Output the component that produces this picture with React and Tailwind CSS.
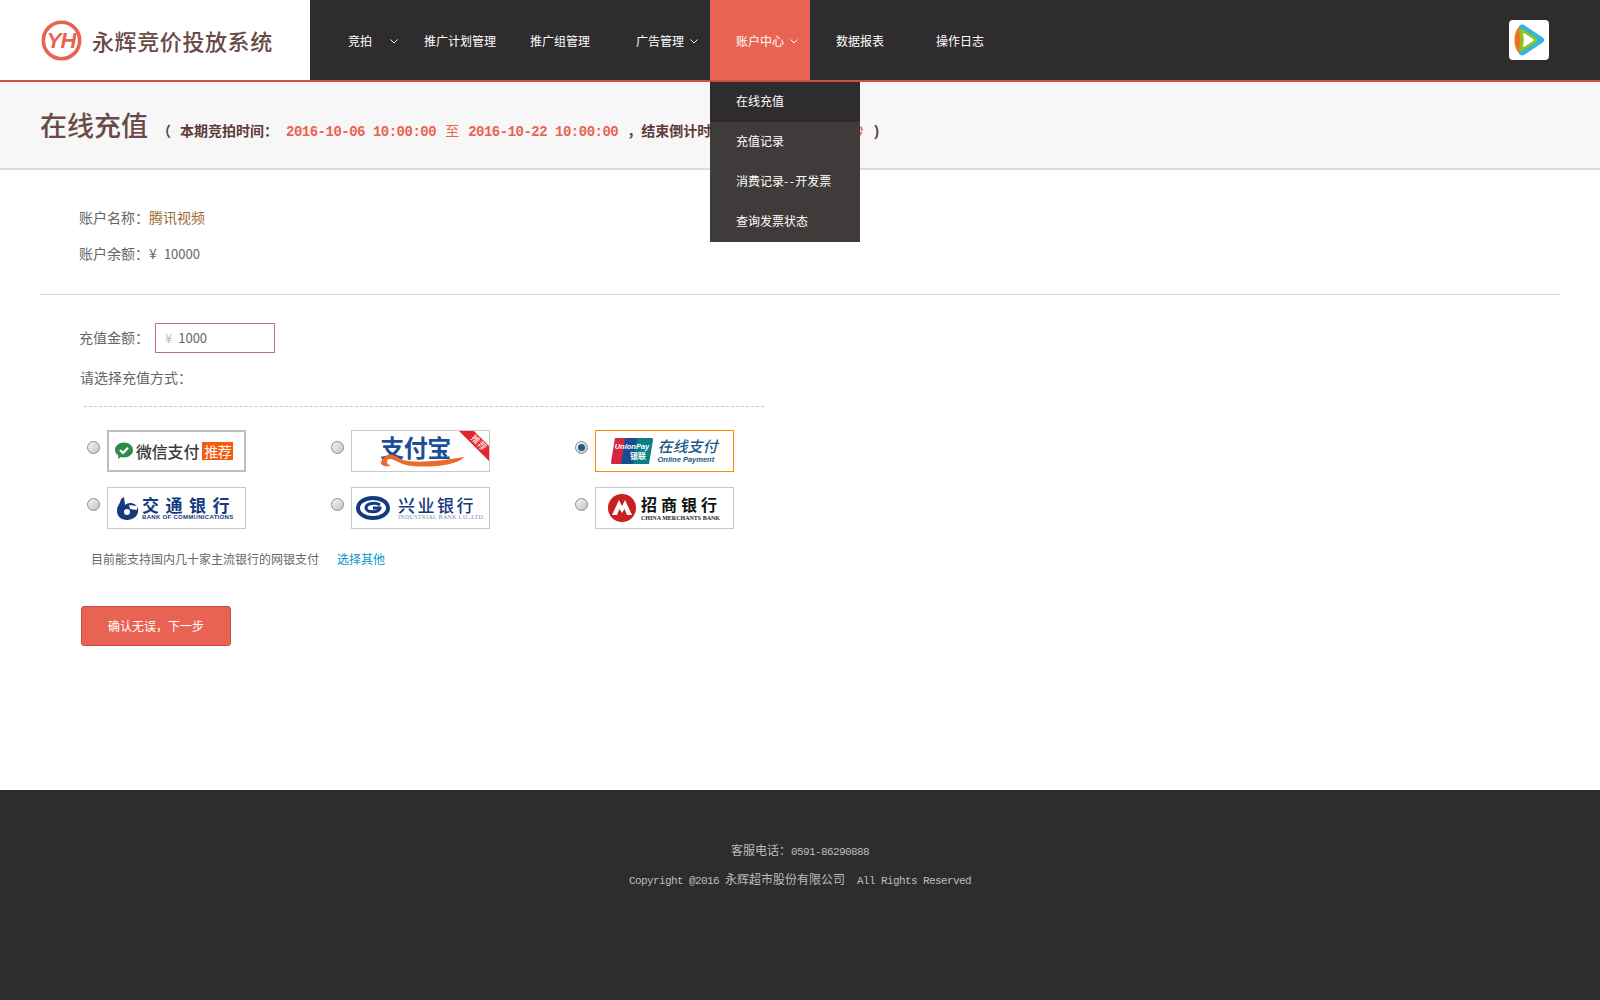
import React from 'react';

const sans = 'font-["Noto_Sans_CJK_SC","Liberation_Sans",sans-serif]';

const navItems = [
  { label: '竞拍', arrow: true },
  { label: '推广计划管理' },
  { label: '推广组管理' },
  { label: '广告管理', arrow: true },
  { label: '账户中心', arrow: true, active: true },
  { label: '数据报表' },
  { label: '操作日志' },
];

const subMenu = [
  '在线充值',
  '充值记录',
  <>消费记录<span className="tracking-[1.5px]">--</span>开发票</>,
  '查询发票状态',
];

const Chevron = () => (
  <svg width="8" height="5" viewBox="0 0 8 5" className="absolute right-[12px] top-[39px]" fill="none" stroke="#fff" strokeWidth="1">
    <path d="M0.5 0.5 L4 4 L7.5 0.5" />
  </svg>
);

const Logo = () => (
  <div className="flex items-center">
    <svg width="41" height="41" viewBox="0 0 41 41">
      <circle cx="20.5" cy="20.5" r="18.2" fill="#fff" stroke="#e96352" strokeWidth="3.6" />
      <text x="20" y="28" textAnchor="middle" fontFamily="Liberation Sans" fontWeight="700" fontStyle="italic" fontSize="22" letterSpacing="-1" fill="#e96352">YH</text>
    </svg>
    <span className="ml-[10px] text-[22px] leading-none font-medium tracking-[0.6px] text-[#6a4a48]">永辉竞价投放系统</span>
  </div>
);

const VideoIcon = () => (
  <div className="flex h-10 w-10 items-center justify-center rounded-[4px] bg-white">
    <svg width="32" height="32" viewBox="0 0 32 32">
      <path d="M6 3 C0 8 0 24 6 29 L13 29 L13 3 Z" fill="#e8761c" />
      <path d="M6 3 C6 1 9 0 11 1 L29 13 C32 15 32 17 29 19 L11 31 C9 32 6 31 6 29 C9 21 9 11 6 3 Z" fill="#2eb4e6" />
      <path d="M6 7 C6 5 8 4 10 5 L23 13.5 C25 15 25 17 23 18.5 L10 27 C8 28 6 27 6 25 C8 19 8 13 6 7 Z" fill="#8dc21f" />
      <path d="M10 10 C10 9 11 9 12 9.5 L20 15 C21 15.6 21 16.4 20 17 L12 22.5 C11 23 10 23 10 22 C11 18 11 14 10 10 Z" fill="#fff" />
    </svg>
  </div>
);

const Radio = ({ checked }) => (
  <span className="mt-[11px] flex h-[13px] w-[13px] shrink-0 items-center justify-center rounded-full border border-[#8a8a8a] bg-linear-to-br from-[#f6f6f6] to-[#c4c4c4]">
    {checked && <span className="h-[7px] w-[7px] rounded-full bg-[#1f5f8f]" />}
  </span>
);

const WechatLogo = () => (
  <div className="flex w-full items-center pl-[5px]">
    <svg width="20" height="20" viewBox="0 0 20 20" className="shrink-0">
      <path d="M10 1.5 C15 1.5 19 4.8 19 9 C19 13.2 15 16.5 10 16.5 C9 16.5 8 16.4 7 16.1 L4 18 L4.4 14.6 C2.3 13.2 1 11.2 1 9 C1 4.8 5 1.5 10 1.5 Z" fill="#2e8b48" />
      <path d="M6 9 L9 12 L14 6.8" fill="none" stroke="#fff" strokeWidth="2.2" />
    </svg>
    <span className="ml-[2px] text-[16px] leading-none font-medium tracking-[-0.2px] text-[#3a3a3a]">微信支付</span>
    <span className="ml-[3px] flex h-[18px] w-[31px] items-center justify-center bg-[#f9580d] text-[14px] leading-none tracking-[-0.5px] text-white">推荐</span>
  </div>
);

const AlipayLogo = () => (
  <div className="relative flex h-full w-full justify-center">
    <span className="mt-[2px] -ml-[10px] text-[24px] leading-[28px] font-bold tracking-[-0.5px] text-[#1b4f9c]">支付宝</span>
    <svg width="86" height="18" viewBox="0 0 86 18" className="absolute left-[28px] top-[20px]">
      <path d="M1 11 C5 2 13 2 19 7 C25 12 50 12 84 6 C78 14 52 17 32 15 C20 14 14 7 9 8 C6 9 6 13 11 15 C4 16 0 14 1 11 Z" fill="#ef6a28" />
    </svg>
    <svg width="30" height="30" viewBox="0 0 30 30" className="absolute right-0 top-0">
      <path d="M0 0 L15 0 L30 15 L30 30 Z" fill="#e2262a" />
    </svg>
    <span className="absolute right-[1px] top-[7px] rotate-45 text-[9px] leading-none text-white">推荐</span>
  </div>
);

const UnionPayLogo = () => (
  <div className="flex w-full items-center justify-center">
    <svg width="42" height="26" viewBox="0 0 42 26" className="shrink-0">
      <path d="M4 0 L18 0 L14 26 L1 26 C0 26 0 25 0 24 Z" fill="#d9263f" />
      <path d="M14 0 L30 0 L26 26 L10 26 Z" fill="#1a4c8f" />
      <path d="M26 0 L41 0 C42 0 42 1 42 2 L38 26 L22 26 Z" fill="#0b7f85" />
      <text x="21" y="11" textAnchor="middle" fontFamily="Liberation Sans" fontWeight="700" fontStyle="italic" fontSize="7.5" fill="#fff">UnionPay</text>
      <text x="27" y="21" textAnchor="middle" fontFamily="Noto Sans CJK SC" fontWeight="700" fontSize="8" fill="#fff">银联</text>
    </svg>
    <div className="ml-[4px] flex flex-col">
      <span className="text-[15px] leading-[18px] font-medium text-[#1d5a8a] italic">在线支付</span>
      <span className="font-['Liberation_Sans'] text-[7.5px] leading-[10px] font-bold text-[#1d5a8a] italic">Online Payment</span>
    </div>
  </div>
);

const BocomLogo = () => (
  <div className="flex w-full items-center justify-center">
    <svg width="22" height="24" viewBox="0 0 22 24" className="mt-[2px] shrink-0">
      <path d="M4 2 L7 0 L8 8 C12 4 20 6 21 12 C22 19 16 23 10 23 C4 23 0 19 0 14 C0 9 3 7 4 2 Z" fill="#15397f" />
      <circle cx="10" cy="15" r="3" fill="#fff" />
      <path d="M12 8 L20 9 L20 13 L13 12 Z" fill="#fff" />
    </svg>
    <div className="ml-[3px] flex flex-col items-start">
      <span className="text-[17px] leading-[19px] font-bold tracking-[6.5px] text-[#15397f]">交通银行</span>
      <span className="font-['Liberation_Sans'] text-[6px] leading-[7px] font-bold tracking-[0.3px] text-[#15397f]">BANK OF COMMUNICATIONS</span>
    </div>
  </div>
);

const IndustrialLogo = () => (
  <div className="flex w-full items-center justify-center">
    <svg width="34" height="24" viewBox="0 0 34 24" className="shrink-0">
      <ellipse cx="17" cy="12" rx="15" ry="10" fill="none" stroke="#15397f" strokeWidth="4" />
      <path d="M24 9 C20 6 10 7 10 12 C10 17 24 17 24 12 L17 12" fill="none" stroke="#15397f" strokeWidth="3" />
    </svg>
    <div className="ml-[8px] flex flex-col">
      <span className="text-[17px] leading-[19px] font-medium tracking-[2.5px] text-[#15397f]">兴业银行</span>
      <span className="font-['Liberation_Serif'] text-[6px] leading-[7px] tracking-[0.3px] text-[#7f8fb0]">INDUSTRIAL BANK CO.,LTD.</span>
    </div>
  </div>
);

const CmbLogo = () => (
  <div className="flex w-full items-center justify-center">
    <svg width="28" height="28" viewBox="0 0 28 28" className="shrink-0">
      <circle cx="14" cy="14" r="14" fill="#c8201e" />
      <path d="M4 21 L11 6 L14 12 L17 6 L24 21 L19 21 L16.5 15 L14 19 L11.5 15 L9 21 Z" fill="#fff" />
    </svg>
    <div className="ml-[5px] flex flex-col">
      <span className="text-[16px] leading-[20px] font-bold tracking-[4px] text-[#111]">招商银行</span>
      <span className="font-['Liberation_Serif'] text-[6px] leading-[8px] font-bold text-[#222]">CHINA MERCHANTS BANK</span>
    </div>
  </div>
);

const payOptions = [
  { logo: <WechatLogo />, box: 'border-2 border-[#bdbdbd]' },
  { logo: <AlipayLogo />, box: 'border border-[#c8c8c8]' },
  { logo: <UnionPayLogo />, box: 'border border-[#ff8a00]', checked: true },
  { logo: <BocomLogo />, box: 'border border-[#c8c8c8]' },
  { logo: <IndustrialLogo />, box: 'border border-[#c8c8c8]' },
  { logo: <CmbLogo />, box: 'border border-[#c8c8c8]' },
];

export default function App() {
  return (
    <div className={`min-h-[1000px] bg-white ${sans} text-[12px] text-[#666]`}>
      <header className="flex h-[82px] border-b-2 border-[#c9533f]">
        <div className="flex w-[310px] items-center bg-white pl-[41px]">
          <Logo />
        </div>
        <nav className="flex flex-1 items-center bg-[#2e2c2d] pr-[51px]">
          <ul className="flex h-full flex-1">
            {navItems.map((item) => (
              <li
                key={item.label}
                className={`relative flex h-full w-[100px] items-center justify-center pt-[2px] text-white ${item.active ? 'bg-[#e96352]' : ''}`}
              >
                {item.label}
                {item.arrow && <Chevron />}
                {item.active && (
                  <ul className="absolute left-0 top-[82px] z-10 w-[150px] bg-[#3f3b3a]">
                    {subMenu.map((sub, i) => (
                      <li key={i} className={`flex h-10 items-center pb-[2px] pl-[26px] ${i === 0 ? 'bg-[#2e2c2d]' : ''}`}>
                        {sub}
                      </li>
                    ))}
                  </ul>
                )}
              </li>
            ))}
          </ul>
          <VideoIcon />
        </nav>
      </header>

      <div className="flex h-[88px] items-center border-b-2 border-[#dcdcdc] bg-[#f7f7f7] pb-[1px] pl-[40px]">
        <h1 className="text-[27px] leading-none font-medium text-[#6a4a48]">在线充值</h1>
        <p className="ml-[9px] mt-[14px] flex items-baseline text-[14px] font-bold whitespace-nowrap text-[#5f3c3a]">
          <span className="w-[23px]">（</span>
          <span>本期竞拍时间：</span>
          <span className="font-['Liberation_Mono'] ml-[8px] tracking-[-0.5px] text-[#e96352]">2016-10-06 10:00:00</span>
          <span className="mx-[9px] font-normal text-[#e96352]">至</span>
          <span className="font-['Liberation_Mono'] tracking-[-0.5px] text-[#e96352]">2016-10-22 10:00:00</span>
          <span className="ml-[9px]">，结束倒计时：</span>
          <span className="w-[138px] text-right text-[#e96352]">00天00时00分00秒</span>
          <span className="ml-[9px] font-['Liberation_Mono']">)</span>
        </p>
      </div>

      <main className="px-[40px]">
        <div className="h-[125px] border-b border-[#d5d5d5] pl-[39px] pt-[37px] text-[14px]">
          <p className="leading-5">
            账户名称：<span className="text-[#996c33]">腾讯视频</span>
          </p>
          <p className="mt-[16px] leading-5">
            账户余额：¥ <span className="ml-[4px] text-[13px]">10000</span>
          </p>
        </div>

        <div className="mt-[28px] flex items-center pl-[39px] text-[14px]">
          <span className="pb-[2px]">充值金额：</span>
          <div className="ml-[6px] flex h-[30px] w-[120px] items-center border border-[#c56f6f] pl-[9px] text-[13px]">
            <span className="text-[#bbb]">¥</span>
            <span className="ml-[6px]">1000</span>
          </div>
        </div>

        <p className="mt-[14px] pl-[40px] text-[14px] leading-5">请选择充值方式：</p>

        <div className="ml-[44px] mt-[19px] w-[680px] border-t border-dashed border-[#c8c8c8]" />

        <div className="ml-[47px] mt-[23px] grid w-[732px] grid-cols-3 gap-y-[15px]">
          {payOptions.map((opt, i) => (
            <div key={i} className="flex gap-[7px]">
              <Radio checked={opt.checked} />
              <div className={`flex h-[42px] w-[139px] items-center bg-white ${opt.box}`}>{opt.logo}</div>
            </div>
          ))}
        </div>

        <p className="ml-[51px] mt-[20px] leading-5">
          目前能支持国内几十家主流银行的网银支付
          <a className="ml-[18px] text-[#0099cc]">选择其他</a>
        </p>

        <button className="ml-[41px] mt-[37px] h-10 w-[150px] rounded-[3px] border border-[#cc4a4a] bg-[#e96352] text-white">
          确认无误，下一步
        </button>
      </main>

      <footer className="mt-[144px] h-[210px] bg-[#2e2c2d] pt-[50px] text-center text-[#bdbdbd]">
        <p className="leading-5">
          客服电话：<span className="font-['Liberation_Mono'] text-[11px] tracking-[-0.6px]">0591-86290888</span>
        </p>
        <p className="mt-[7px] leading-5">
          <span className="font-['Liberation_Mono'] text-[11px] tracking-[-0.6px]">Copyright @2016 </span>
          永辉超市股份有限公司
          <span className="font-['Liberation_Mono'] ml-[12px] text-[11px] tracking-[-0.6px]">All Rights Reserved</span>
        </p>
      </footer>
    </div>
  );
}
